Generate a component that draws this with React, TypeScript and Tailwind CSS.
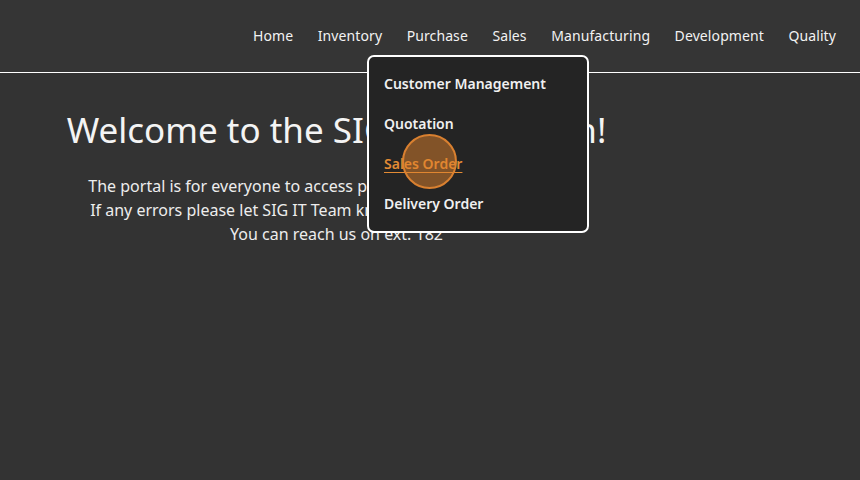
import React from "react";

const navItems = ["Home", "Inventory", "Purchase", "Sales", "Manufacturing", "Development", "Quality"];

export default function App() {
  return (
    <div
      className="relative w-[860px] h-[480px] overflow-hidden bg-[#333333] text-[#f0f0f0]"
      style={{ fontFamily: '"Noto Sans", "Open Sans", sans-serif' }}
    >
      <header className="h-[72px] bg-[#353535] flex items-center justify-end pr-[24px] gap-[24.5px] text-[14px] border-b border-white box-content">
        {navItems.map((n) => (
          <span key={n} className="leading-[20px] text-[#f2f2f2] tracking-[0.1px]">
            {n}
          </span>
        ))}
      </header>

      <main className="w-[673px] text-center pt-[34px]">
        <h1 className="text-[35px] leading-[45px] font-normal text-[#f4f4f4] whitespace-nowrap">
          Welcome to the SIG Main Admin!
        </h1>
        <p className="mt-[22px] text-[16px] leading-[24px] text-[#ededed] whitespace-nowrap">
          The portal is for everyone to access production data and all forms.
          <br />
          If any errors please let SIG IT Team know so we can fix it very fast.
          <br />
          You can reach us on ext. 182
        </p>
      </main>

      <div className="absolute left-[367px] top-[55px] w-[222px] h-[178px] rounded-[7px] border-2 border-white bg-[#242424] px-[15px] pt-[6px] pb-[8px]">
        {["Customer Management", "Quotation", "Sales Order", "Delivery Order"].map((i) => (
          <div
            key={i}
            className={
              "h-[40px] flex items-center text-[14px] font-semibold " +
              (i === "Sales Order" ? "text-[#e38b34] underline underline-offset-[3px]" : "text-[#f0f0f0]")
            }
          >
            {i}
          </div>
        ))}
      </div>

      <div className="absolute left-[402px] top-[134px] w-[55px] h-[55px] rounded-full border-2 border-[#d98030] bg-[#e0822b]/50" />
    </div>
  );
}
